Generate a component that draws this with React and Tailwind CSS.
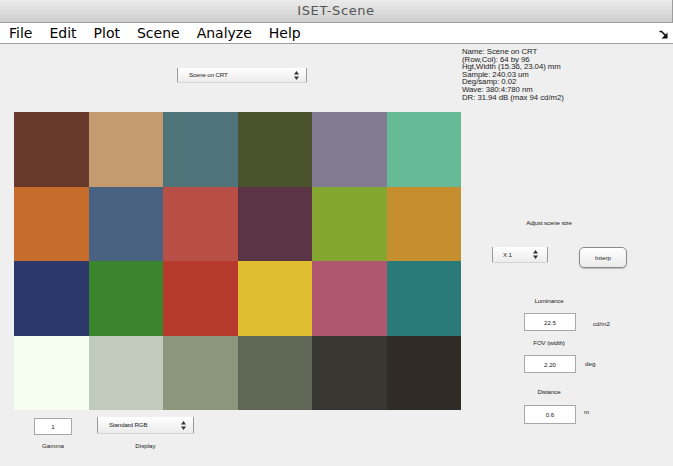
import React from "react";

const chart = [
  ["#673a2b", "#c49a6f", "#4e7479", "#4a532b", "#827b92", "#66bb96"],
  ["#c66d2d", "#4a6282", "#b84f47", "#5b3546", "#83a630", "#c58e2e"],
  ["#2c386a", "#3b852f", "#b83a2c", "#dfbe32", "#b1566f", "#2b7a7a"],
  ["#f5fef0", "#c1cbbd", "#8a977a", "#5f6855", "#383630", "#302b25"],
];

const info = [
  "Name: Scene on CRT",
  "(Row,Col): 64 by 96",
  "Hgt,Width (15.36, 23.04) mm",
  "Sample: 240.03 um",
  "Deg/samp: 0.02",
  "Wave: 380:4:780 nm",
  "DR: 31.94 dB (max 94 cd/m2)",
];

const Arrows = () => (
  <svg width="5" height="9" viewBox="0 0 5 9" className="shrink-0">
    <path d="M2.5 0 L5 3.5 H0 Z" fill="#333" />
    <path d="M2.5 9 L5 5.5 H0 Z" fill="#333" />
  </svg>
);

const Popup = ({ label, className }) => (
  <div
    className={`flex items-center justify-between border-x border-[#9a9a9a] bg-gradient-to-b from-white to-[#ececec] shadow-[0_1px_0_#d4d4d4] ${className}`}
  >
    <span className="text-[6.2px] tracking-[-0.15px] leading-none text-[#222]">{label}</span>
    <Arrows />
  </div>
);

const Field = ({ value, className }) => (
  <div
    className={`flex items-center justify-center bg-white border border-[#a8a8a8] text-[6.2px] text-[#222] ${className}`}
  >
    {value}
  </div>
);

const Label = ({ children, className }) => (
  <div className={`w-[176px] text-center text-[6.2px] leading-[10px] tracking-[-0.15px] text-[#222] ${className}`}>
    {children}
  </div>
);

export default function App() {
  return (
    <div
      className="w-[673px] h-[466px] bg-[#efefef] overflow-hidden flex flex-col"
      style={{ fontFamily: "'Liberation Sans', Arial, sans-serif" }}
    >
      {/* title bar */}
      <div className="h-[23px] shrink-0 flex items-center justify-center bg-gradient-to-b from-[#ebebeb] to-[#cfcfcf] border-b border-[#9c9c9c] border-r">
        <span
          className="text-[13px] tracking-[0.6px] text-[#555]"
          style={{ fontFamily: "'DejaVu Sans', sans-serif" }}
        >
          ISET-Scene
        </span>
      </div>

      {/* menu bar */}
      <div
        className="h-[21px] shrink-0 flex items-center bg-white border-b border-[#a0a0a0] pl-[9px] pr-[5px]"
        style={{ fontFamily: "'DejaVu Sans', sans-serif" }}
      >
        <div className="flex gap-[17px] text-[14px] text-black leading-none">
          <span>File</span>
          <span>Edit</span>
          <span>Plot</span>
          <span>Scene</span>
          <span>Analyze</span>
          <span>Help</span>
        </div>
        <svg width="9" height="9" viewBox="0 0 9 9" className="ml-auto mt-[2px]">
          <path d="M0.5 1.5 H2.5 L6.5 5.5" stroke="#111" strokeWidth="1.6" fill="none" />
          <path d="M8.5 2.5 V8.5 H2.5 Z" fill="#111" />
        </svg>
      </div>

      {/* body */}
      <div className="flex flex-1">
        {/* left side */}
        <div className="w-[461px] shrink-0 pl-[14px] flex flex-col">
          <Popup label="Scene on CRT" className="mt-[24px] ml-[163px] w-[130px] h-[14px] pl-[11px] pr-[7px]" />

          <div className="mt-[30px] grid grid-cols-6 w-[447px] h-[298px]">
            {chart.flat().map((c, i) => (
              <div key={i} style={{ backgroundColor: c }} />
            ))}
          </div>

          <div className="flex mt-[7px]">
            <div className="flex flex-col items-center ml-[20px] w-[38px]">
              <Field value="1" className="w-[38px] h-[17px] mt-[1px]" />
              <span className="text-[6.2px] leading-[10px] text-[#222] mt-[6px]">Gamma</span>
            </div>
            <div className="flex flex-col items-center ml-[25px] w-[97px]">
              <Popup label="Standard RGB" className="w-[97px] h-[16px] pl-[11px] pr-[7px]" />
              <span className="text-[6.2px] leading-[10px] text-[#222] mt-[8px]">Display</span>
            </div>
          </div>
        </div>

        {/* right side */}
        <div className="flex flex-col flex-1">
          <div className="mt-[4px] ml-[1px] text-[7.8px] leading-[7.6px] tracking-[-0.05px] text-[#222]">
            {info.map((l) => (
              <div key={l}>{l}</div>
            ))}
          </div>

          <Label className="mt-[117px]">Adjust scene size</Label>

          <div className="flex items-start mt-[19px]">
            <Popup label="X 1" className="ml-[31px] w-[56px] h-[15px] pl-[10px] pr-[9px]" />
            <button className="ml-[31px] w-[48px] h-[21px] rounded-[5px] border border-[#8a8a8a] bg-gradient-to-b from-white to-[#ebebeb] shadow-[0_1px_1px_#bbb] text-[6.2px] text-[#222]">
              Interp
            </button>
          </div>

          <Label className="mt-[28px]">Luminance</Label>
          <div className="flex items-center mt-[7px]">
            <Field value="22.5" className="ml-[63px] w-[52px] h-[18px]" />
            <span className="ml-[17px] mt-[3px] text-[6.2px] text-[#222]">cd/m2</span>
          </div>

          <Label className="mt-[7px]">FOV (width)</Label>
          <div className="flex items-center mt-[7px]">
            <Field value="2.20" className="ml-[63px] w-[52px] h-[18px]" />
            <span className="ml-[9px] -mt-[1px] text-[6.2px] text-[#222]">deg</span>
          </div>

          <Label className="mt-[14px]">Distance</Label>
          <div className="flex items-start mt-[8px]">
            <Field value="0.6" className="ml-[63px] w-[52px] h-[19px]" />
            <span className="ml-[8px] mt-[2px] text-[6.2px] leading-[10px] text-[#222]">m</span>
          </div>
        </div>
      </div>
    </div>
  );
}
